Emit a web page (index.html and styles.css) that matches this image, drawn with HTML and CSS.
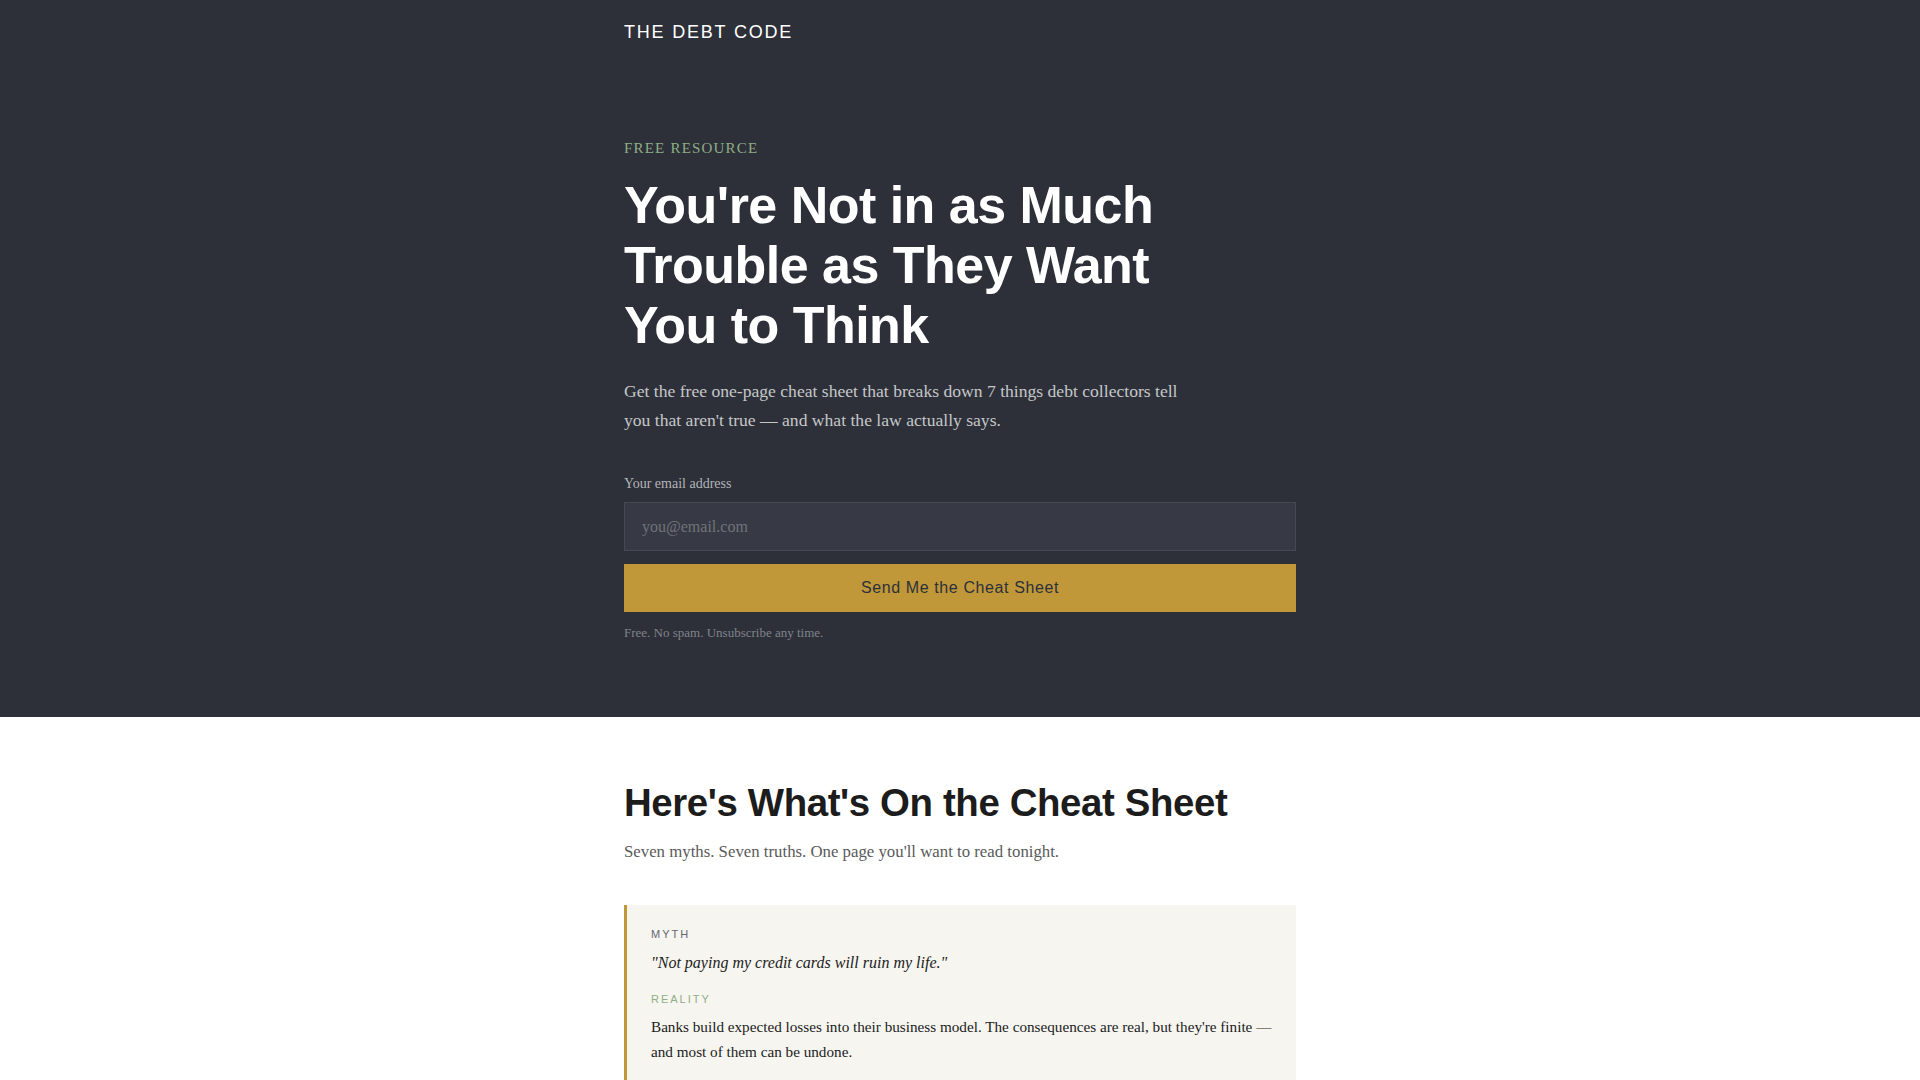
FILE: index.html
```html
<!DOCTYPE html>
<html lang="en">
<head>
<meta charset="utf-8">
<title>The Debt Code — Free Cheat Sheet</title>
<link rel="stylesheet" href="styles.css">
</head>
<body>
<div class="dark">
  <header class="wrap header">
    <div class="brand">THE DEBT CODE</div>
  </header>
  <section class="wrap hero">
    <div class="eyebrow">FREE RESOURCE</div>
    <h1 class="hero-title">You're Not in as Much Trouble as They Want You to Think</h1>
    <p class="hero-lede">Get the free one-page cheat sheet that breaks down 7 things debt collectors tell you that aren't true — and what the law actually says.</p>
    <form class="signup" onsubmit="return false">
      <label class="signup-label" for="email">Your email address</label>
      <input class="signup-input" id="email" type="email" placeholder="you@email.com">
      <button class="signup-btn" type="submit">Send Me the Cheat Sheet</button>
      <p class="signup-note">Free. No spam. Unsubscribe any time.</p>
    </form>
  </section>
</div>
<section class="wrap sheet">
  <h2 class="sheet-title">Here's What's On the Cheat Sheet</h2>
  <p class="sheet-sub">Seven myths. Seven truths. One page you'll want to read tonight.</p>
  <div class="myth-card">
    <div class="tag tag-myth">MYTH</div>
    <p class="myth-quote">"Not paying my credit cards will ruin my life."</p>
    <div class="tag tag-reality">REALITY</div>
    <p class="reality-text">Banks build expected losses into their business model. The consequences are real, but they're finite — and most of them can be undone.</p>
  </div>
</section>
</body>
</html>
```

FILE: styles.css
```css
* { box-sizing: border-box; }
html, body { margin: 0; padding: 0; }
body {
  background: #ffffff;
  font-family: "Liberation Serif", "Times New Roman", serif;
  color: #1c1c1c;
}
.wrap {
  width: 672px;
  margin: 0 auto;
}
.dark {
  background: #2d3039;
  padding-bottom: 77px;
}
.header {
  padding: 21px 0 0;
}
.brand {
  font-family: "Liberation Sans", Arial, sans-serif;
  font-size: 18px;
  line-height: 22px;
  letter-spacing: 0.1em;
  color: #ffffff;
}
.hero {
  padding-top: 97px;
}
.eyebrow {
  font-family: "Liberation Serif", serif;
  font-size: 15px;
  line-height: 16px;
  letter-spacing: 1.2px;
  color: #8fae85;
}
.hero-title {
  margin: 19px 0 0;
  max-width: 590px;
  font-family: "Liberation Sans", Arial, sans-serif;
  font-weight: 700;
  font-size: 52px;
  line-height: 60px;
  letter-spacing: -0.01em;
  color: #ffffff;
}
.hero-lede {
  margin: 21.8px 0 0;
  max-width: 576px;
  font-size: 17.6px;
  line-height: 29.4px;
  color: #c6c7c9;
}
.signup {
  margin-top: 40.8px;
  display: flex;
  flex-direction: column;
}
.signup-label {
  font-size: 14px;
  line-height: 16px;
  color: #b3b4b8;
  margin-bottom: 9.8px;
}
.signup-input {
  height: 49px;
  padding: 0 17px;
  border: 1px solid #464953;
  background: #373a44;
  font-family: "Liberation Serif", serif;
  font-size: 16px;
  color: #e0e0e0;
  outline: none;
}
.signup-input::placeholder { color: #6f727a; }
.signup-btn {
  margin-top: 13px;
  height: 48px;
  border: 0;
  background: #c0983a;
  font-family: "Liberation Sans", Arial, sans-serif;
  font-size: 16px;
  letter-spacing: 0.6px;
  color: #2d3039;
  cursor: pointer;
}
.signup-note {
  margin: 13px 0 0;
  font-size: 13px;
  line-height: 15px;
  color: #80838a;
}
.sheet {
  padding-top: 62.5px;
}
.sheet-title {
  margin: 0;
  font-family: "Liberation Sans", Arial, sans-serif;
  font-weight: 700;
  font-size: 38.4px;
  line-height: 46px;
  letter-spacing: -0.01em;
  color: #1c1c1c;
}
.sheet-sub {
  margin: 14.8px 0 0;
  font-size: 16.8px;
  line-height: 22px;
  color: #5a5a5a;
}
.myth-card {
  margin-top: 42.2px;
  background: #f6f5f0;
  border-left: 3px solid #c0983a;
  padding: 23.3px 24px 24px;
}
.tag {
  font-family: "Liberation Sans", Arial, sans-serif;
  font-size: 11px;
  line-height: 13px;
  letter-spacing: 0.18em;
}
.tag-myth { color: #666870; }
.tag-reality { color: #8fae85; margin-top: 19.5px; }
.myth-quote {
  margin: 11px 0 0;
  font-style: italic;
  font-size: 16px;
  line-height: 22px;
  color: #1c1c1c;
}
.reality-text {
  margin: 7.2px 0 0;
  font-size: 15.2px;
  line-height: 25.7px;
  color: #1c1c1c;
}
```
